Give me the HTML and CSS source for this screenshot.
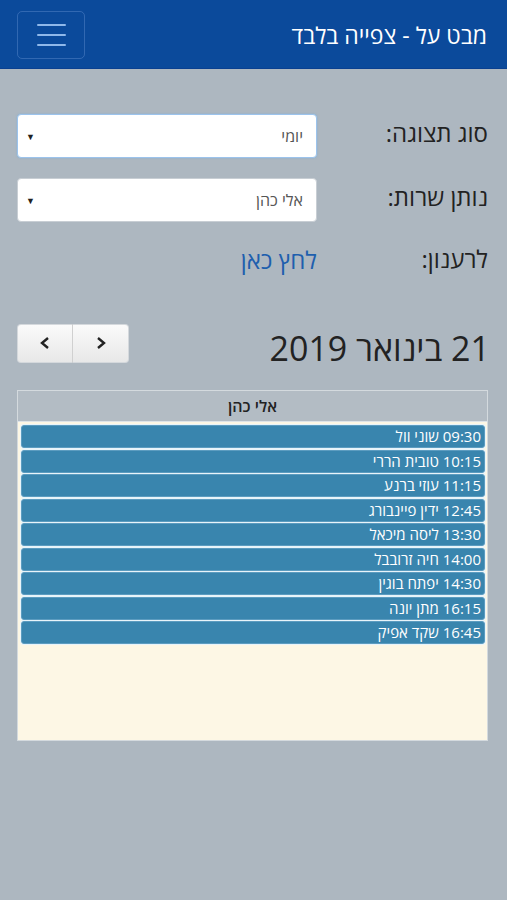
FILE: index.html
```html
<!DOCTYPE html>
<html lang="he" dir="rtl">
<head>
<meta charset="utf-8">
<title>מבט על - צפייה בלבד</title>
<link rel="stylesheet" href="styles.css">
</head>
<body>
<header class="topbar">
  <h1 class="title">מבט על - צפייה בלבד</h1>
  <button class="menu-btn" aria-label="menu">
    <span class="bar"></span><span class="bar"></span><span class="bar"></span>
  </button>
</header>
<main class="content">
  <div class="form">
    <label class="label">סוג תצוגה:</label>
    <div class="select focused"><span class="value">יומי</span><span class="caret">▼</span></div>
    <label class="label">נותן שרות:</label>
    <div class="select"><span class="value">אלי כהן</span><span class="caret">▼</span></div>
    <span class="label">לרענון:</span>
    <a class="link" href="#">לחץ כאן</a>
  </div>
  <div class="date-row">
    <h2 class="date">21 בינואר 2019</h2>
    <div class="nav">
      <button class="nav-btn"><svg width="14" height="14" viewBox="0 0 14 14"><path d="M10 2 L4 7 L10 12" fill="none" stroke="#222" stroke-width="2.4" stroke-linejoin="miter"/></svg></button>
      <button class="nav-btn"><svg width="14" height="14" viewBox="0 0 14 14"><path d="M4 2 L10 7 L4 12" fill="none" stroke="#222" stroke-width="2.4" stroke-linejoin="miter"/></svg></button>
    </div>
  </div>
  <div class="calendar">
    <div class="cal-head">אלי כהן</div>
    <div class="cal-body">
      <div class="event">09:30 שוני וול</div>
      <div class="event">10:15 טובית הררי</div>
      <div class="event">11:15 עוזי ברנע</div>
      <div class="event">12:45 ידין פיינבורג</div>
      <div class="event">13:30 ליסה מיכאל</div>
      <div class="event">14:00 חיה זרובבל</div>
      <div class="event">14:30 יפתח בוגין</div>
      <div class="event">16:15 מתן יונה</div>
      <div class="event">16:45 שקד אפיק</div>
    </div>
  </div>
</main>
</body>
</html>
```
FILE: styles.css
```css
* { box-sizing: border-box; }
html, body { margin: 0; padding: 0; }
body {
  background: #adb7c0;
  font-family: "Open Sans", "Liberation Sans", "DejaVu Sans", sans-serif;
  color: #222;
  height: 900px;
}
.topbar {
  height: 69px;
  background: #0b4a9b;
  border-bottom: 1px solid #0a4090;
  display: flex;
  align-items: center;
  justify-content: space-between;
  padding: 0 20px 0 17px;
}
.title {
  margin: 0;
  color: #fff;
  font-size: 23px;
  font-weight: normal;
  line-height: 1;
  padding-top: 2px;
}
.menu-btn {
  width: 68px;
  height: 48px;
  margin-top: 1px;
  background: transparent;
  border: 1px solid rgba(120, 160, 220, 0.35);
  border-radius: 5px;
  display: flex;
  flex-direction: column;
  align-items: center;
  justify-content: center;
  gap: 8px;
  padding: 0;
}
.bar {
  display: block;
  width: 29px;
  height: 2px;
  background: #8fb8ea;
  border-radius: 1px;
}
.content {
  padding: 0 19px 0 17px;
}
.form {
  display: grid;
  grid-template-columns: 171px 300px;
  grid-template-rows: 44px 44px 40px;
  row-gap: 20px;
  padding-top: 45px;
  align-items: center;
}
.label {
  font-size: 24px;
  color: #222;
  line-height: 1;
  margin-top: -6px;
}
.select {
  height: 44px;
  background: #fff;
  border: 1px solid #c8ced4;
  border-radius: 4px;
  display: flex;
  align-items: center;
  justify-content: space-between;
  padding: 0 13px 0 8px;
}
.select.focused {
  border-color: #9cc3ec;
  box-shadow: 0 0 2px rgba(102, 175, 233, 0.6);
}
.value {
  font-size: 16px;
  color: #555;
}
.caret {
  font-size: 9px;
  color: #222;
}
.link {
  font-size: 24px;
  color: #1e5fae;
  text-decoration: none;
  line-height: 1;
  margin-top: -4px;
}
.date-row {
  display: flex;
  justify-content: space-between;
  align-items: center;
  margin-top: 40px;
  height: 40px;
}
.date {
  margin: 0;
  font-size: 34px;
  font-weight: normal;
  color: #222;
  line-height: 1;
  margin-top: 12px;
  margin-right: -2px;
}
.nav {
  display: flex;
  direction: ltr;
  height: 39px;
  margin-left: 0;
  margin-top: 2px;
}
.nav-btn {
  width: 56px;
  height: 39px;
  background: linear-gradient(#fafafa, #e8e8e8);
  border: 1px solid #d4d8dc;
  display: flex;
  align-items: center;
  justify-content: center;
  padding: 0;
}
.nav-btn:first-child { border-radius: 4px 0 0 4px; border-right: 1px solid #d0d0d0; }
.nav-btn:last-child { border-radius: 0 4px 4px 0; border-left: none; }
.calendar {
  margin-top: 28px;
  border: 1px solid #d4dade;
  height: 351px;
  display: flex;
  flex-direction: column;
}
.cal-head {
  height: 31px;
  background: #b3bcc4;
  border-bottom: 1px solid #dfe4e8;
  text-align: center;
  font-size: 16px;
  font-weight: 600;
  line-height: 30px;
  color: #222;
}
.cal-body {
  flex: 1;
  background: #fdf7e5;
  padding: 3px 2px 0 3px;
}
.event {
  height: 23px;
  margin-bottom: 1.5px;
  background: #3985ae;
  border: 1px solid #5c9cc0;
  border-radius: 3px;
  box-shadow: 0 0 0 1px #e8f4fa;
  color: #fff;
  font-size: 15px;
  line-height: 21px;
  padding-right: 3px;
  white-space: nowrap;
}
```
